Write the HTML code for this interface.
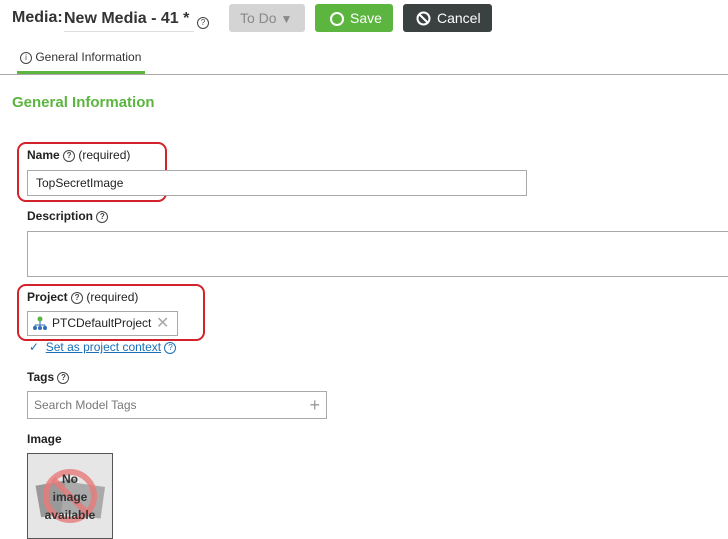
<!DOCTYPE html>
<html><head><style>
body{margin:0;width:728px;height:539px;background:#fff;font-family:"Liberation Sans",sans-serif;position:relative;overflow:hidden;color:#222}
.a{position:absolute;white-space:nowrap}
.q{display:inline-block;width:10px;height:10px;border:1px solid #444;border-radius:50%;font-size:8px;line-height:10px;text-align:center;color:#444;vertical-align:1px}
.lbl{font-size:12px;font-weight:bold;color:#222}
.box{border:1px solid #aaa;background:#fff}
.red{border:2px solid #d2232a;border-radius:9px}
</style></head><body>
<div class="a" style="left:12px;top:9px;font-size:16px;font-weight:bold;color:#333">Media:</div>
<div class="a" style="left:64px;top:10px;font-size:16px;font-weight:bold;color:#333;border-bottom:1px solid #ddd;width:130px;padding-bottom:3px">New Media - 41 *</div>
<div class="a" style="left:197px;top:13px"><span class="q">?</span></div>
<div class="a" style="left:229px;top:4px;width:76px;height:28px;background:#d4d4d4;border-radius:3px;color:#888;font-size:14px;line-height:28px;text-indent:11px">To Do <span style="font-size:12px">▼</span></div>
<div class="a" style="left:315px;top:4px;width:78px;height:28px;background:#5bb53f;border-radius:3px;color:#fff;font-size:14px;line-height:28px"><span style="position:absolute;left:15px;top:8px;width:10px;height:10px;border:2px solid #fff;border-radius:50%"></span><span style="position:absolute;left:35px">Save</span></div>
<div class="a" style="left:403px;top:4px;width:89px;height:28px;background:#3b4041;border-radius:3px;color:#fff;font-size:14px;line-height:28px"><svg style="position:absolute;left:13px;top:7px" width="15" height="15"><circle cx="7.5" cy="7.5" r="6" stroke="#fff" stroke-width="2" fill="none"/><line x1="3.5" y1="3.5" x2="11.5" y2="11.5" stroke="#fff" stroke-width="2"/></svg><span style="position:absolute;left:34px">Cancel</span></div>
<div class="a" style="left:20px;top:50px;font-size:12px;color:#333"><span class="q" style="font-size:8px">i</span> General Information</div>
<div class="a" style="left:17px;top:71px;width:128px;height:3px;background:#5bb53f"></div>
<div class="a" style="left:0;top:74px;width:728px;height:1px;background:#aaa"></div>
<div class="a" style="left:12px;top:94px;font-size:15px;font-weight:bold;color:#5bb53f">General Information</div>
<div class="a red" style="left:17px;top:142px;width:146px;height:56px"></div>
<div class="a lbl" style="left:27px;top:148px">Name <span class="q">?</span> <span style="font-weight:normal">(required)</span></div>
<div class="a box" style="left:27px;top:170px;width:498px;height:24px;font-size:12px;line-height:24px;text-indent:8px">TopSecretImage</div>
<div class="a lbl" style="left:27px;top:209px">Description <span class="q">?</span></div>
<div class="a box" style="left:27px;top:231px;width:710px;height:44px"></div>
<div class="a red" style="left:17px;top:284px;width:184px;height:53px"></div>
<div class="a lbl" style="left:27px;top:290px">Project <span class="q">?</span> <span style="font-weight:normal">(required)</span></div>
<div class="a box" style="left:27px;top:311px;width:149px;height:23px;font-size:12px;line-height:23px">
<svg style="position:absolute;left:4px;top:4px" width="16" height="15"><circle cx="8" cy="3" r="2.5" fill="#5bb53f"/><path d="M8 5v4M3 9h10M3 9v2M8 9v2M13 9v2" stroke="#2e6db4" fill="none"/><circle cx="3" cy="12" r="2" fill="#2e6db4"/><circle cx="8" cy="12" r="2" fill="#2e6db4"/><circle cx="13" cy="12" r="2" fill="#2e6db4"/></svg>
<span style="position:absolute;left:24px">PTCDefaultProject</span><span style="position:absolute;left:128px;color:#aaa;font-size:16px">✕</span></div>
<div class="a" style="left:29px;top:340px;font-size:12px;color:#1a6fb8"><span style="color:#1a6fb8">✓</span> &nbsp;<u>Set as project context</u> <span class="q" style="border-color:#1a6fb8;color:#1a6fb8">?</span></div>
<div class="a lbl" style="left:27px;top:370px">Tags <span class="q">?</span></div>
<div class="a box" style="left:27px;top:391px;width:298px;height:26px;font-size:12px;line-height:26px;color:#777;text-indent:6px">Search Model Tags<span style="position:absolute;right:6px;font-size:18px;color:#999">+</span></div>
<div class="a lbl" style="left:27px;top:432px">Image</div>
<div class="a" style="left:27px;top:453px;width:84px;height:84px;border:1px solid #555;background:#e6e6e6;overflow:hidden">
<svg class="a" style="left:0;top:0" width="84" height="84"><rect x="10" y="28" width="40" height="32" fill="#999" transform="rotate(-10 30 44)"/><rect x="35" y="30" width="40" height="32" fill="#aaa" transform="rotate(8 55 46)"/><circle cx="42" cy="42" r="24" stroke="#e87a7a" stroke-width="6" fill="none" opacity=".8"/><line x1="25" y1="25" x2="59" y2="59" stroke="#e87a7a" stroke-width="6" opacity=".8"/></svg>
<div class="a" style="left:0;top:16px;width:84px;text-align:center;font-size:12px;font-weight:bold;line-height:18px;color:#333;white-space:normal">No<br>image<br>available</div></div>
</body></html>
